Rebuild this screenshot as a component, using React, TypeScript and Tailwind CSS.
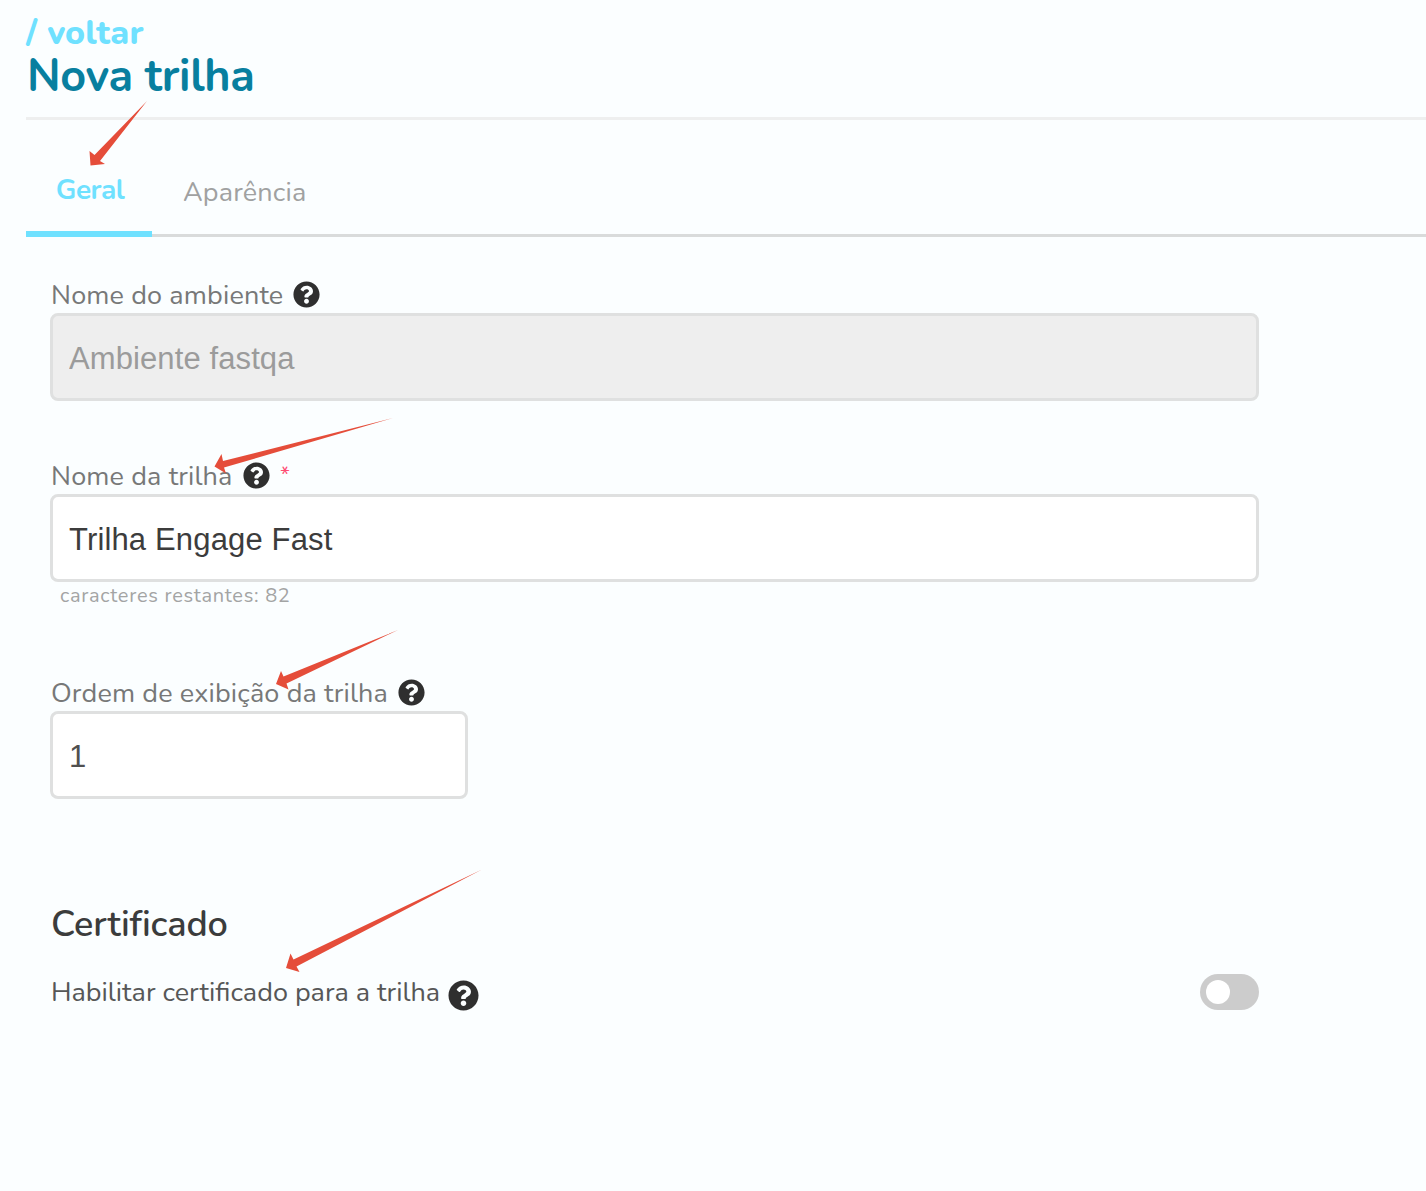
import React from 'react';
import { FaQuestionCircle } from 'react-icons/fa';

interface LabelProps {
  children: React.ReactNode;
  textClass: string;
  required?: boolean;
}

const FieldLabel: React.FC<LabelProps> = ({ children, textClass, required }) => (
  <label className="flex h-[38px] items-center whitespace-nowrap pl-px text-[27px] leading-[38px] text-[#777878]">
    <span className={textClass}>{children}</span>
    <FaQuestionCircle className="size-[27px] shrink-0 text-[#2f2f2f]" />
    {required && <span className="ml-[10px] text-[22px] leading-[22px] text-[#ff4d73]">*</span>}
  </label>
);

// Hand-drawn style arrows pointing at the fields to fill in
const Arrows: React.FC = () => (
  <svg className="pointer-events-none absolute left-0 top-0" width="1426" height="1191" fill="#e54d3a">
    <path d="M147 101L100 161L105 164L90.500 165.500L89.500 151L94.500 155Z" />
    <path d="M393 418L224 467.500L226 473.500L214.500 466.500L221.500 454L223 461Z" />
    <path d="M398 630L286.500 683.500L288.500 689.500L276 684L281 671L283.500 676.500Z" />
    <path d="M482 869.500L296.500 966.500L299.500 972L286 968L290.500 953.500L293.500 959.500Z" />
  </svg>
);

const App: React.FC = () => {
  return (
    <div className="relative h-[1191px] w-[1426px] overflow-hidden bg-[#fbfeff] pl-[26px] font-['Nunito','Lato',sans-serif]">
      {/* Header */}
      <header className="h-[120px] border-b-[3px] border-[#eeefef] pt-[15px]">
        <a href="#" className="block h-9 w-fit whitespace-nowrap text-[34px] font-extrabold leading-9 tracking-[0.2px] text-[#6fe1ff]">
          / voltar
        </a>
        <h1 className="ml-px h-[52px] w-fit whitespace-nowrap text-[45px] font-bold leading-[52px] tracking-[-0.3px] text-[#087f9f]">
          Nova trilha
        </h1>
      </header>

      {/* Tabs */}
      <nav className="flex h-[117px] items-end border-b-[3px] border-[#d9dbdb]">
        <button className="-mb-[3px] h-[69px] w-[126px] border-b-[6px] border-[#6fe1ff] pb-[20px] pl-[2px] text-[28px] font-bold leading-8 tracking-[-0.5px] text-[#6fe1ff]">
          Geral
        </button>
        <button className="h-[66px] pb-[16px] pl-[31px] text-[27px] leading-8 tracking-[0.15px] text-[#a0a1a1]">
          Aparência
        </button>
      </nav>

      {/* Form */}
      <form className="w-[1233px] pl-6">
        <div className="pt-[38px]">
          <FieldLabel textClass="w-[242px] pt-[3px] tracking-[0.15px]">Nome do ambiente</FieldLabel>
          <input
            disabled
            value="Ambiente fastqa"
            className="block h-[88px] w-full rounded-[8px] border-[3px] border-[#dfe0e0] bg-[#eeeeee] px-4 pt-[3px] font-['Liberation_Sans',sans-serif] text-[31px] tracking-[0.1px] text-[#9b9b9b]"
          />
        </div>

        <div className="pt-[55px]">
          <FieldLabel textClass="w-[192px] pt-[3px] tracking-[0.15px]" required>Nome da trilha</FieldLabel>
          <input
            defaultValue="Trilha Engage Fast"
            className="block h-[88px] w-full rounded-[8px] border-[3px] border-[#dfe0e0] bg-white px-4 pt-[3px] font-['Liberation_Sans',sans-serif] text-[31px] tracking-[0.15px] text-[#3c3c3c]"
          />
          <p className="ml-[10px] h-[27px] whitespace-nowrap text-[20px] leading-[27px] tracking-[0.7px] text-[#a3a4a4]">
            caracteres restantes: 82
          </p>
        </div>

        <div className="pt-[64px]">
          <FieldLabel textClass="w-[347px] pt-[3px] tracking-[0.15px]">Ordem de exibição da trilha</FieldLabel>
          <input
            defaultValue="1"
            className="block h-[88px] w-[418px] rounded-[8px] border-[3px] border-[#dfe0e0] bg-white px-4 pt-[3px] font-['Liberation_Sans',sans-serif] text-[31px] text-[#505050]"
          />
        </div>

        <section className="pt-[102px]">
          <h2 className="ml-px h-[48px] w-fit whitespace-nowrap text-[36px] font-semibold leading-[48px] tracking-[-0.1px] text-[#3b3c3c]">
            Certificado
          </h2>
          <div className="mt-[23px] flex h-[40px] items-center justify-between">
            <div className="flex items-center whitespace-nowrap pl-px text-[27px] leading-10 text-[#565757]">
              <span className="w-[397px] pt-px">Habilitar certificado para a trilha</span>
              <FaQuestionCircle className="mt-[6px] size-[31px] shrink-0 text-[#2f2f2f]" />
            </div>
            <button
              type="button"
              role="switch"
              aria-checked="false"
              className="flex h-[36px] w-[59px] items-center rounded-full bg-[#cccccc] pl-[6px]"
            >
              <span className="size-[24px] rounded-full bg-white" />
            </button>
          </div>
        </section>
      </form>

      <Arrows />
    </div>
  );
};

export default App;
